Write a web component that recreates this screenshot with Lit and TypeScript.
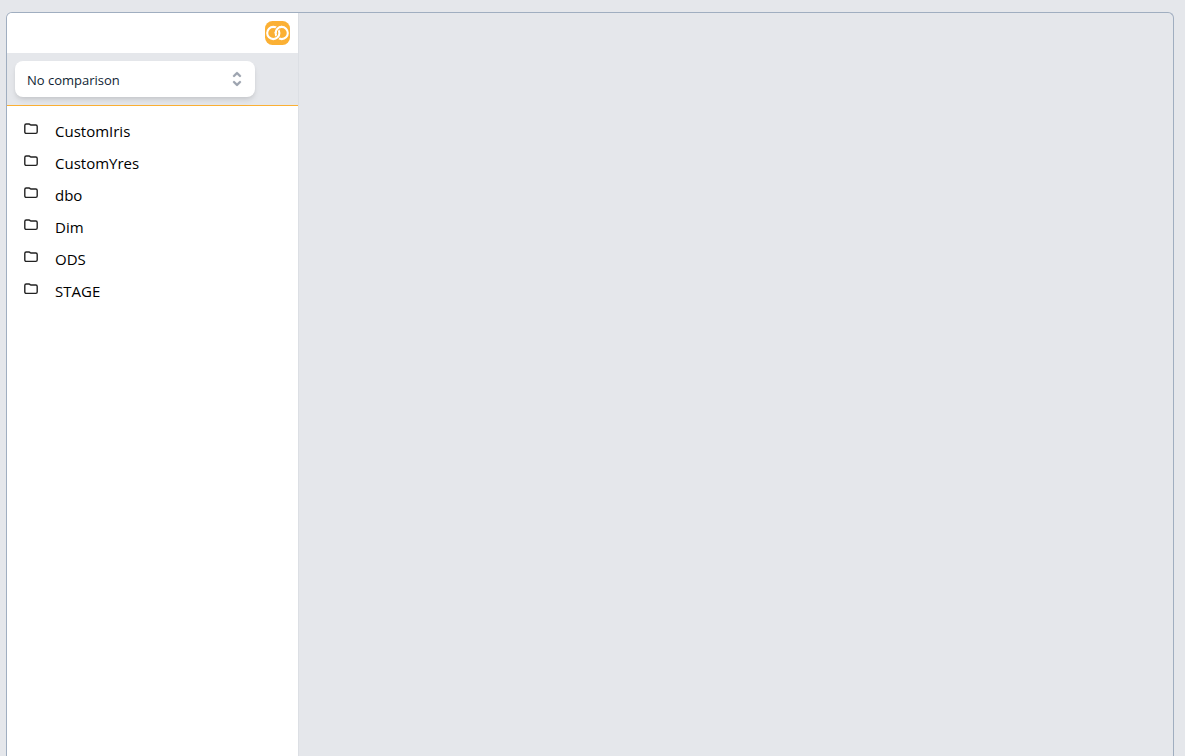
import { LitElement, html, css } from "lit";
import { customElement, property, state } from "lit/decorators.js";

@customElement("schema-item")
class SchemaItem extends LitElement {
  @property() name = "";

  static styles = css`
    :host {
      display: block;
    }
    .row {
      display: flex;
      align-items: flex-start;
      gap: 16px;
      width: 100%;
      height: 32px;
      padding: 0 16px;
      border: 0;
      background: none;
      color: #000;
      font: 15px/32px "Open Sans", "Noto Sans", sans-serif;
      text-align: left;
      cursor: pointer;
    }
    .folder {
      flex: none;
      width: 16px;
      height: 16px;
      margin-top: 6px;
    }
  `;

  render() {
    return html`
      <button class="row" type="button">
        <svg class="folder" viewBox="0 0 16 16" fill="none" stroke="#222" stroke-width="1.4" stroke-linejoin="round" aria-hidden="true">
          <path d="M3.200 3h2.800c.5 0 .8.2 1 .5.2.3.6.5 1 .5H12.800c.9 0 1.400.5 1.400 1.400v5.600c0 .9-.5 1.400-1.400 1.400H3.200c-.9 0-1.400-.5-1.400-1.400V4.400c0-.9.5-1.400 1.400-1.400z" />
        </svg>
        <span>${this.name}</span>
      </button>
    `;
  }
}

@customElement("app-root")
class AppRoot extends LitElement {
  @state() schemas = ["CustomIris", "CustomYres", "dbo", "Dim", "ODS", "STAGE"];

  static styles = css`
    :host {
      display: flex;
      box-sizing: border-box;
      height: 100vh;
      padding: 12px 11px 0 6px;
      background: #e5e7eb;
      font-family: "Open Sans", "Noto Sans", sans-serif;
    }
    * {
      box-sizing: border-box;
    }
    .panel {
      display: flex;
      flex: 1;
      border: 1px solid #a0aec0;
      border-bottom: 0;
      border-radius: 6px 6px 0 0;
      overflow: hidden;
    }
    .sidebar {
      display: flex;
      flex-direction: column;
      width: 292px;
      border-right: 1px solid #dcdfe4;
      background: #fff;
    }
    .brand {
      display: flex;
      justify-content: flex-end;
      padding: 8px;
    }
    .logo-link,
    .logo {
      display: block;
      width: 25px;
      height: 24px;
    }
    .compare {
      padding: 8px;
      border-bottom: 1px solid #fbb034;
      background: #e5e7eb;
    }
    .picker {
      display: grid;
      align-items: center;
      width: 240px;
    }
    .select {
      grid-area: 1 / 1;
      width: 100%;
      height: 36px;
      padding: 2px 40px 0 12px;
      border: 0;
      border-radius: 8px;
      appearance: none;
      background: #fff;
      box-shadow: 0 4px 6px -1px rgb(0 0 0 / 0.1), 0 2px 4px -1px rgb(0 0 0 / 0.06);
      color: #0f1e33;
      font: 13px/20px "Open Sans", "Noto Sans", sans-serif;
    }
    .chevrons {
      grid-area: 1 / 1;
      justify-self: end;
      width: 20px;
      height: 20px;
      margin-right: 8px;
      pointer-events: none;
    }
    .list {
      margin: 0;
      padding: 9px 0;
      list-style: none;
    }
    .content {
      flex: 1;
    }
  `;

  render() {
    return html`
      <div class="panel">
        <aside class="sidebar">
          <header class="brand">
            <a class="logo-link" href="#" aria-label="Home">
              <svg class="logo" viewBox="0 0 25 24" fill="none" stroke="#fff" stroke-width="2.1" aria-hidden="true">
                <rect width="25" height="24" rx="7.500" fill="#fbb034" stroke="none" />
                <circle cx="16.700" cy="12" r="6.100" />
                <path d="M14 14.200A6.100 6.100 0 0 1 10.500 17.800" stroke="#fbb034" stroke-width="3.700" />
                <circle cx="8.300" cy="12" r="6.100" />
                <path d="M11 9.800A6.100 6.100 0 0 1 14.500 6.200" stroke="#fbb034" stroke-width="3.700" />
                <path d="M10.600 12A6.100 6.100 0 0 1 16.700 5.900" />
              </svg>
            </a>
          </header>
          <div class="compare">
            <div class="picker">
              <select class="select" aria-label="Comparison">
                <option>No comparison</option>
              </select>
              <svg class="chevrons" viewBox="0 0 20 20" fill="#9ca3af" stroke="#9ca3af" stroke-width="0.3" aria-hidden="true">
                <path fill-rule="evenodd" d="M10 3a1 1 0 01.707.293l3 3a1 1 0 01-1.414 1.414L10 5.414 7.707 7.707a1 1 0 01-1.414-1.414l3-3A1 1 0 0110 3zm-3.707 9.293a1 1 0 011.414 0L10 14.586l2.293-2.293a1 1 0 011.414 1.414l-3 3a1 1 0 01-1.414 0l-3-3a1 1 0 010-1.414z" clip-rule="evenodd" />
              </svg>
            </div>
          </div>
          <ul class="list">
            ${this.schemas.map((name) => html`<li><schema-item .name=${name}></schema-item></li>`)}
          </ul>
        </aside>
        <main class="content"></main>
      </div>
    `;
  }
}
